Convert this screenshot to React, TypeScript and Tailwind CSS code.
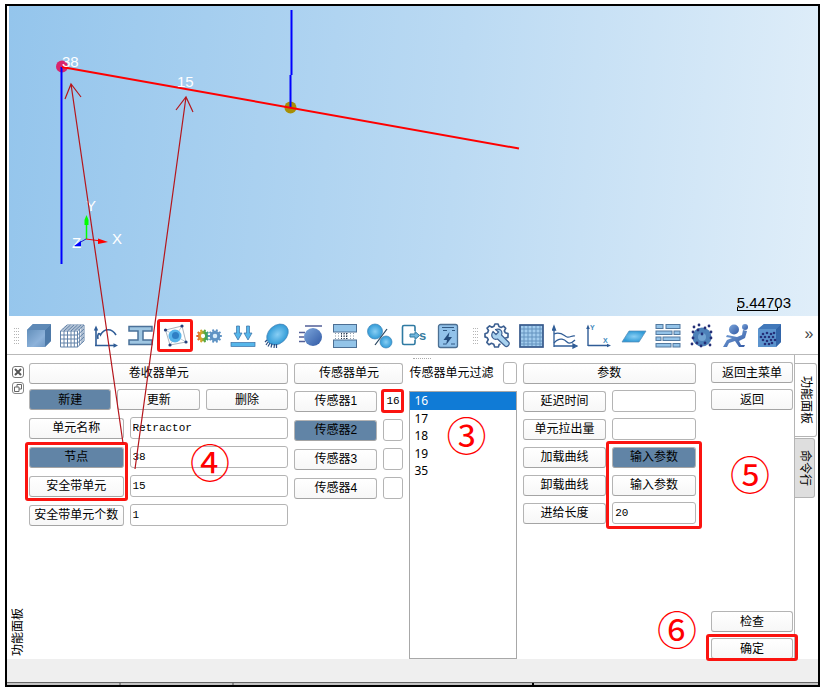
import React from "react";

const uiFont = "font-['Liberation_Sans','Noto_Sans_CJK_SC',sans-serif]";
const box =
  "min-w-0 rounded-[3px] border border-[#b4b4b4] border-b-[#a4a4a4] text-[12px] leading-[18px] text-black";

function Btn({ children, active = false, ring = false }: {
  children: React.ReactNode;
  active?: boolean;
  ring?: boolean;
}) {
  return (
    <button
      type="button"
      className={`${box} relative h-[21px] w-full whitespace-nowrap ${
        active ? "border-[#527595] bg-[#6184a6]" : "bg-linear-to-b from-white to-[#f7f7f7]"
      }`}
    >
      {children}
      {ring && <Ring className="-inset-x-[6px] -top-[5px] -bottom-[3px] border-[3px]" />}
    </button>
  );
}

function Field({ value = "", label }: { value?: string; label: string }) {
  return (
    <input
      type="text"
      aria-label={label}
      defaultValue={value}
      className="h-[22px] w-full min-w-0 rounded-[3px] border border-[#b4b4b4] bg-white px-[2px] font-['Liberation_Mono',monospace] text-[11px] text-black outline-none"
    />
  );
}

function Ring({ className }: { className: string }) {
  return <span className={`pointer-events-none absolute rounded-[3px] border-[#fb1410] ${className}`} />;
}

function Step({ children, className }: { children: string; className: string }) {
  return (
    <span className={`pointer-events-none absolute font-['Noto_Sans_CJK_SC',sans-serif] text-[40px] leading-[40px] text-[#ff0000] ${className}`}>
      {children}
    </span>
  );
}

function Grip() {
  return (
    <span className="grid grid-cols-3 gap-x-[1px] gap-y-[2px]">
      {Array.from({ length: 18 }, (_, i) => (
        <i key={i} className="h-px w-px bg-[#b5b5b5]" />
      ))}
    </span>
  );
}

function Gear({ cx, cy, r, fill, teeth = 10, hole = "#fff" }: {
  cx: number; cy: number; r: number; fill: string; teeth?: number; hole?: string;
}) {
  const mid = r * 0.62;
  return (
    <g>
      {Array.from({ length: teeth }, (_, i) => {
        const a = (i * 2 * Math.PI) / teeth;
        return (
          <line
            key={i}
            x1={cx + Math.cos(a) * r} y1={cy + Math.sin(a) * r}
            x2={cx + Math.cos(a) * (r + 2)} y2={cy + Math.sin(a) * (r + 2) + 0.01}
            stroke={fill} strokeWidth="2"
          />
        );
      })}
      <circle cx={cx} cy={cy} r={mid + 0.8} fill={hole} stroke={fill} strokeWidth="3" />
    </g>
  );
}

const navy = "#2f5c96";

const leftTools: [string, React.ReactNode][] = [
  ["实体", <>
    <path d="M2 7 8 1H26V18L20 24H2Z" fill="url(#steel)" />
    <path d="M2 7 8 1H26L20 7Z" fill="#5e89b6" />
    <path d="M20 7 26 1V18L20 24Z" fill="#4d79a8" />
  </>],
  ["网格", <g fill="none" stroke="#6282a8" strokeWidth="1">
    <path d="M1.500 8H18.500V24H1.500ZM5 8V24M8.500 8V24M12 8V24M15.300 8V24M1.500 12H18.500M1.500 16H18.500M1.500 20H18.500" />
    <path d="M1.500 8 8 2H25L18.500 8M25 2V18L18.500 24M5 8 11.500 2M8.500 8 15 2M12 8 18.500 2M15.300 8 22 2M3.700 6H20.700M5.800 4H23M20.700 6V22M23 4V20M18.500 12 25 6M18.500 16 25 10M18.500 20 25 14" />
  </g>],
  ["曲线", <g fill="none" stroke={navy} strokeWidth="1.600">
    <path d="M3 23V6M2 22.500H21" />
    <path d="M3 2.500 .8 7.500H5.200ZM25 22.500 20.500 20.300V24.700Z" fill={navy} stroke="none" />
    <path d="M5 16C4 11 6 9 7.500 12C11 5 19 5 23 12" />
  </g>],
  ["梁", <path d="M2 3.500H25V8H16V17H25V21.500H2V17H11V8H2Z" fill="#9fc6e2" stroke="#4b7199" strokeWidth="1.500" />],
  ["安全带", <>
    <path d="M3.500 7 20 3 24 19 8 22Z" fill="none" stroke="#a9b3be" strokeWidth="1" />
    <path d="M3.500 7 24 19M20 3 8 22" stroke="#9db8cc" strokeWidth=".7" />
    <circle cx="13" cy="13" r="6.500" fill="#57b4ea" /><circle cx="13.500" cy="12.500" r="3.500" fill="#2f7fc4" />
    <g fill="#24407c"><circle cx="3.500" cy="7" r="1.600" /><circle cx="20" cy="3" r="1.600" /><circle cx="24" cy="19" r="1.600" /><circle cx="8" cy="22" r="1.600" /></g>
  </>],
  ["耦合", <>
    <Gear cx={7} cy={13} r={4.6} fill="url(#rainbow)" />
    <Gear cx={19} cy={13} r={4.8} fill="#5f93c4" hole="#d9edfa" />
  </>],
  ["载荷", <g fill="#56b6ea" stroke="#386ea4" strokeWidth=".7">
    <path d="M6.500 3H9.500V10L12 10 8 17 4 10 6.500 10ZM16.500 3H19.500V10L22 10 18 17 14 10 16.500 10Z" />
    <rect x="1" y="19.500" width="24" height="4" />
  </g>],
  ["约束", <>
    <ellipse cx="13.500" cy="11.500" rx="12" ry="9" transform="rotate(-42 13.500 11.500)" fill="url(#ball)" stroke="#4381b6" strokeWidth=".7" />
    <path d="M3 17 1 19M4 19 2 22M6 20 4 23.500M8 20.500 7 24.500M10.500 21 10 25M12.500 21 12.500 25" stroke="#294d82" strokeWidth="1.200" />
  </>],
  ["初速度", <>
    <circle cx="15" cy="14" r="9" fill="url(#blueBall)" />
    <path d="M7 3H24M1 9.500H7M1 14H6M1 18.500H7" stroke="#525f98" strokeWidth="1.700" />
  </>],
  ["接触", <>
    <g fill="#93c4e8" stroke="#4c6f94" strokeWidth="1"><rect x="1.500" y="1.500" width="23" height="7.500" /><rect x="1.500" y="17" width="23" height="7.500" /></g>
    <path d="M3 10.500H23M3 13H23M3 15.500H23" stroke="#8c9ba9" strokeDasharray="1 2" />
    <path d="M9.500 10V16M12 10V16M14.500 10V16" stroke="#283951" strokeDasharray="1.500 1" />
  </>],
  ["连接", <g stroke="#3d84b8" strokeWidth=".7">
    <circle cx="8" cy="8.500" r="7.500" fill="url(#ball)" /><circle cx="19" cy="19" r="6" fill="url(#ball)" />
    <path d="M8 22 20 6" stroke="#26445e" strokeWidth="1.200" />
  </g>],
  ["输出", <>
    <path d="M14 8V4Q14 2.500 12.500 2.500H3Q1.500 2.500 1.500 4V20Q1.500 21.500 3 21.500H12.500Q14 21.500 14 20V17" fill="none" stroke="#2f7aa2" strokeWidth="1.600" />
    <path d="M9 11H14V8.500L18.500 12.500 14 16.500V14H9Z" fill="#72b6dc" stroke="#2f7aa2" />
    <text x="18" y="17" className="font-['Liberation_Sans']" fontSize="13" fontWeight="700" fill="#397c9f">s</text>
  </>],
  ["计算", <>
    <rect x="3.500" y="1.500" width="19" height="23" rx="2" fill="#92c2ea" stroke="#4c6f92" strokeWidth="1.300" />
    <path d="M7 4.500H19M8 7.500H12M17 7.500H20M8 21H11M16 21H20" stroke="#315983" strokeWidth="1.200" />
    <path d="M14.500 9 8.500 17H12L11 22 17 14H13.500Z" fill="#244b7b" />
  </>],
];

const rightTools: [string, React.ReactNode][] = [
  ["设置", <g fill="none" stroke="#3c5f91" strokeWidth="1.800" strokeLinejoin="round">
    <path d="M17 22 15.500 22 14.500 25H10.500L9.500 22 7 21 4.300 22.500 2 20 3.500 17 2.500 15 0 14V10.500L2.800 9.500 3.800 7 2.200 4.500 5 2 7.500 3.500 9.800 2.500 10.800 0H14.200L15.200 2.800 17.500 3.700 20.200 2.300 22.500 4.800 21 7.500 22 9.500 25 10.500V14.500L22 15.200" transform="translate(1 1) scale(.92)" />
    <path d="M9 8.500 12 11.500 14.500 9 11.500 6.500C16 5 19 8 17.500 12L25 19.500C26 22 23 24.500 21 23L13.500 16C9 17.500 6 13 9 8.500Z" fill="#a9d2ef" strokeWidth="1.200" />
  </g>],
  ["表格", <>
    <rect x="2" y="2" width="23" height="22" fill="#a3cdee" stroke="#35588a" strokeWidth="1.700" />
    <path d="M6 3V23M10 3V23M14 3V23M18 3V23M22 3V23M3 6H24M3 10H24M3 14H24M3 18H24M3 21H24" stroke="#6593bf" strokeWidth="1" />
  </>],
  ["多曲线", <g fill="none" stroke={navy} strokeWidth="1.300">
    <path d="M2 24V5M2 23H22" /><path d="M2 3 .5 7H3.500ZM25 23 21 21V25Z" fill={navy} />
    <path d="M2 11C9 8 12 13 15 14S20 12 23 13M2 20C8 13 13 17 15 19S20 20 23 17" />
  </g>],
  ["坐标系", <>
    <path d="M2 23V4M2 22.500H22" stroke={navy} strokeWidth="1.400" />
    <path d="M2 1.500 .2 6H3.800ZM25 22.500 21 20.700V24.300Z" fill={navy} />
    <text x="4" y="7" fontSize="7" className="font-['Liberation_Sans']" fontWeight="700" fill="#3f8bbd">Y</text>
    <text x="17" y="20" fontSize="7" className="font-['Liberation_Sans']" fontWeight="700" fill="#3f8bbd">X</text>
  </>],
  ["平面", <path d="M1 19 8 8H25L18 19Z" fill="url(#ball)" stroke="#5789b5" strokeWidth=".7" />],
  ["材料", <g fill="#94c3e8" stroke="#52799f" strokeWidth="1">
    <rect x="1" y="1.500" width="7" height="4" /><rect x="11" y="1.500" width="14" height="4" />
    <rect x="1" y="8" width="16" height="3.500" /><rect x="19" y="8" width="6" height="3.500" />
    <rect x="1" y="14" width="5" height="3.500" /><rect x="8" y="14" width="17" height="3.500" />
    <rect x="1" y="20.500" width="15" height="3.500" /><rect x="18" y="20.500" width="7" height="3.500" />
  </g>],
  ["粒子", <>
    <circle cx="13" cy="14" r="9.500" fill="#4d81b9" /><circle cx="13" cy="14" r="4" fill="#71a3d2" />
    <g fill="#242f77">{[[5,4],[10,2],[16,5],[20,3],[22,9],[22,15],[21,22],[16,20],[12,23],[8,20],[3,21],[4,15],[4,9],[9,7],[13,11]].map(([x, y], i) => <circle key={i} cx={x} cy={y} r="1.400" />)}</g>
  </>],
  ["气囊", <g fill="url(#blueBall)">
    <circle cx="11" cy="6.500" r="5" /><circle cx="22" cy="4" r="3" />
    <path d="M4 12 14 14 19 12 20 7 24 8 22 15 16 18 18 22 22 22 21 24H16L12 18 6 20 4 24H0L4 17 9 15 3 14Z" />
  </g>],
  ["气体域", <>
    <path d="M1 6 7 1H24V19L19 24H1Z" fill="#5c94ce" /><path d="M1 6 7 1H24L19 6Z" fill="#4178ba" /><path d="M19 6 24 1V19L19 24Z" fill="#3265a9" />
    <g fill="#252f78">{[[6,11],[10,10],[14,11],[17,10],[4,14],[8,14],[12,14],[16,14],[6,17],[10,18],[14,17],[18,17],[8,21],[12,21],[15,20]].map(([x, y], i) => <circle key={i} cx={x} cy={y} r="1.300" />)}</g>
  </>],
];

function Tools({ items, className }: { items: [string, React.ReactNode][]; className: string }) {
  return (
    <div className={`flex min-w-0 items-center justify-between ${className}`}>
      {items.map(([name, art]) => (
        <button key={name} type="button" aria-label={name} className="relative h-[26px] w-[26px]">
          <svg viewBox="0 0 26 26" className="h-[26px] w-[26px]">{art}</svg>
          {name === "安全带" && <Ring className="-inset-x-[5px] -top-[4px] -bottom-[3px] border-[3px]" />}
        </button>
      ))}
    </div>
  );
}

function Scene() {
  return (
    <div className="relative ml-[2px] h-[310px] overflow-hidden bg-linear-[95deg] from-[#94c5ec] via-[#bbdaf3] via-55% to-[#e0eef9]">
      <svg className="block h-full w-full font-['Liberation_Sans',sans-serif]">
        <g transform="translate(-9 -6)">
          <path d="M291.500 10V75" stroke="#00f" strokeWidth="2" />
          <circle cx="290.500" cy="107.500" r="6" fill="#a88f05" />
          <path d="M290.500 75V107" stroke="#00f" strokeWidth="2" />
          <circle cx="62" cy="66.500" r="6" fill="#d9246c" />
          <path d="M61.500 67V264" stroke="#00f" strokeWidth="2" />
          <path d="M62 67 519 148.500" stroke="#f00" strokeWidth="2" />
          <g fill="#fff" fontSize="15">
            <text x="62" y="67">38</text><text x="177" y="87">15</text>
            <text x="86" y="211">Y</text><text x="112" y="244">X</text><text x="72" y="248">Z</text>
          </g>
          <path d="M86.500 239V218" stroke="#0f0" strokeWidth="1.500" />
          <path d="M86.500 215 88.500 220V225H84.500V220Z" fill="#0f0" />
          <path d="M86 239 101 241" stroke="#f00" /><path d="M98 238.500 108 242 98 244Z" fill="#f00" />
          <path d="M86 239 79 243" stroke="#2222c8" /><path d="M81 241 74 246 81 246Z" fill="#00f" />
        </g>
      </svg>
      <div className="absolute right-[27px] bottom-[5px] font-['Liberation_Sans',sans-serif] text-[15px] leading-[16px] text-black">
        5.44703
        <span className="absolute bottom-0 left-0 h-[4px] w-[41px] border border-t-0 border-black" />
      </div>
    </div>
  );
}

function Row({ children, cols }: { children: React.ReactNode; cols: string }) {
  return <div className={`grid h-[22px] items-center gap-x-[6px] ${cols}`}>{children}</div>;
}

const unitCols = "grid-cols-[94fr_158fr]";
const sensorCols = "grid-cols-[1fr_20px]";
const paramCols = "grid-cols-[1fr_1fr]";

export default function App() {
  return (
    <div className={`relative bg-white px-[5px] py-[4px] text-[12px] text-black ${uiFont}`}>
      <svg width="0" height="0" className="absolute">
        <defs>
          <linearGradient id="steel" x2="1" y2="1"><stop stopColor="#5886b3" /><stop offset=".6" stopColor="#8db2da" /><stop offset="1" stopColor="#648fbd" /></linearGradient>
          <linearGradient id="rainbow" gradientUnits="userSpaceOnUse" x1="0" y1="13" x2="14" y2="13"><stop stopColor="#d8432a" /><stop offset=".35" stopColor="#e0a92a" /><stop offset=".65" stopColor="#4aa840" /><stop offset="1" stopColor="#2f95b8" /></linearGradient>
          <radialGradient id="ball"><stop stopColor="#88cef4" /><stop offset="1" stopColor="#319bd7" /></radialGradient>
          <linearGradient id="blueBall" x2="1" y2="1"><stop stopColor="#7da7dc" /><stop offset="1" stopColor="#3159a4" /></linearGradient>
        </defs>
      </svg>

      <div className="border-2 border-black">
        <Scene />

        <div className="flex h-[39px] items-center gap-[6px] border-b border-[#b9b9b9] pr-[3px] pl-[7px] pt-[1px]" role="toolbar">
          <Grip />
          <Tools items={leftTools} className="flex-[436]" />
          <span className="pl-[6px]"><Grip /></span>
          <Tools items={rightTools} className="flex-[299]" />
          <button type="button" className="ml-[14px] w-[12px] pb-[3px] text-[16px] leading-5 text-[#444]">»</button>
        </div>

        <div className="relative flex h-[304px]">
          <span className="absolute top-[3px] left-1/2 w-[18px] border-t border-dotted border-[#aaa]" />

          <aside className="flex w-[22px] shrink-0 flex-col items-center gap-[4px] pt-[11px] pb-[3px]">
            <button type="button" aria-label="关闭" className="h-[12px] w-[12px] rounded-[3px] border border-[#777]">
              <svg viewBox="0 0 10 10" className="h-[10px] w-[10px]"><path d="M2 2 8 8M8 2 2 8" stroke="#555" strokeWidth="2" /></svg>
            </button>
            <button type="button" aria-label="浮动" className="h-[12px] w-[12px] rounded-[3px] border border-[#888]">
              <svg viewBox="0 0 10 10" className="h-[10px] w-[10px]"><path d="M4 4V1.500H8.500V6H6M1.500 4H6V8.500H1.500Z" fill="none" stroke="#666" /></svg>
            </button>
            <span className="mt-auto rotate-180 leading-[14px] [text-orientation:sideways] [writing-mode:vertical-rl]">功能面板</span>
          </aside>

          <main className="grid min-w-0 flex-1 grid-cols-[259fr_109fr_107fr_173fr_91fr] gap-x-[6px] pt-[7px]">
            <section className="relative flex min-w-0 flex-col gap-[7px]">
              <Row cols="grid-cols-1"><Btn>卷收器单元</Btn></Row>
              <div className="-mt-[2px] grid grid-cols-3 gap-[6px]">
                <Btn active>新建</Btn><Btn>更新</Btn><Btn>删除</Btn>
              </div>
              <Row cols={unitCols}><Btn>单元名称</Btn><Field label="单元名称" value="Retractor" /></Row>
              <div className="relative flex flex-col gap-[7px]">
                <Row cols={unitCols}><Btn active>节点</Btn><Field label="节点" value="38" /></Row>
                <Row cols={unitCols}><Btn>安全带单元</Btn><Field label="安全带单元" value="15" /></Row>
                <div className={`pointer-events-none absolute inset-0 grid gap-x-[6px] ${unitCols}`}>
                  <span className="relative"><Ring className="-inset-x-[4px] -top-[4px] -bottom-[4px] border-[3px]" /></span>
                </div>
              </div>
              <Row cols={unitCols}><Btn>安全带单元个数</Btn><Field label="安全带单元个数" value="1" /></Row>
              <Step className="top-[79px] left-[161px]">④</Step>
            </section>

            <section className="flex min-w-0 flex-col gap-[7px]">
              <Row cols="grid-cols-1"><Btn>传感器单元</Btn></Row>
              {["传感器1", "传感器2", "传感器3", "传感器4"].map((name, i) => (
                <div key={name} className={i === 0 ? "relative -mt-px" : ""}>
                  <Row cols={sensorCols}>
                    <Btn active={i === 1}>{name}</Btn><Field label={name} value={i === 0 ? "16" : ""} />
                  </Row>
                  {i === 0 && <Ring className="-top-px -right-px -bottom-px w-[23px] border-[3px]" />}
                </div>
              ))}
            </section>

            <section className="relative flex min-w-0 flex-col">
              <label className="flex h-[22px] items-center justify-between whitespace-nowrap">
                传感器单元过滤
                <input type="text" className="h-[22px] w-[14px] rounded-[3px] border border-[#b4b4b4] bg-white" />
              </label>
              <div className="mt-[7px] flex-1 border border-[#a8a8a8]">
                <ul role="listbox" className="grid h-[88px] grid-rows-5 font-['Noto_Sans',sans-serif] text-[12px] leading-[18px]">
                  {["16", "17", "18", "19", "35"].map((n, i) => (
                    <li key={n} role="option" aria-selected={i === 0} className={`pl-[4px] ${i === 0 ? "bg-[#107bd6] text-white" : ""}`}>{n}</li>
                  ))}
                </ul>
              </div>
              <Step className="top-[52px] left-[37px]">③</Step>
            </section>

            <section className="flex min-w-0 flex-col gap-[6px]">
              <Row cols="grid-cols-1"><Btn>参数</Btn></Row>
              <Row cols={paramCols}><Btn>延迟时间</Btn><Field label="延迟时间" /></Row>
              <Row cols={paramCols}><Btn>单元拉出量</Btn><Field label="单元拉出量" /></Row>
              <div className="relative flex flex-col gap-[6px]">
                <Row cols={paramCols}><Btn>加载曲线</Btn><Btn active>输入参数</Btn></Row>
                <Row cols={paramCols}><Btn>卸载曲线</Btn><Btn>输入参数</Btn></Row>
                <Row cols={paramCols}><Btn>进给长度</Btn><Field label="进给长度" value="20" /></Row>
                <div className={`pointer-events-none absolute inset-0 grid gap-x-[6px] ${paramCols}`}>
                  <span className="relative col-start-2"><Ring className="-inset-x-[6px] -inset-y-[5px] border-[3px]" /></span>
                </div>
              </div>
            </section>

            <section className="relative flex min-w-0 flex-col gap-[6px] pl-[9px]">
              <Btn>返回主菜单</Btn>
              <Btn>返回</Btn>
              <div className="mt-auto flex flex-col gap-[6px]">
                <Btn>检查</Btn>
                <Btn ring>确定</Btn>
              </div>
              <Step className="top-[91px] left-[28px]">⑤</Step>
              <Step className="right-[96px] bottom-[11px]">⑥</Step>
            </section>
          </main>

          <nav className="ml-px flex w-[24px] shrink-0 flex-col items-start gap-[1px] border-l border-[#b4b4b4] pt-[8px]">
            <button type="button" className="flex h-[74px] w-[22px] items-center justify-center rounded-r-[3px] border border-l-0 border-[#b4b4b4] bg-white leading-[14px] [text-orientation:sideways] [writing-mode:vertical-rl]">功能面板</button>
            <button type="button" className="flex h-[60px] w-[20px] items-center justify-center rounded-r-[3px] border border-l-0 border-[#b4b4b4] bg-[#dedede] leading-[14px] [text-orientation:sideways] [writing-mode:vertical-rl]">命令行</button>
          </nav>
        </div>

        <footer>
          <div className="h-[23px] bg-[#efefef]" />
          <div className="flex h-[3px] border-t border-[#666] bg-[#c4c4c4]">
            <i className="w-[14%] border-r-2 border-[#888]" />
            <i className="w-[14%] border-r-2 border-[#888]" />
            <i className="w-[37%] border-r-2 border-black" />
          </div>
        </footer>
      </div>

      <svg className="pointer-events-none absolute top-0 left-0 h-[480px] w-[300px]" fill="none" stroke="#b5161c" strokeWidth="1.200">
        <path d="M123 443 71 84M65 99 71 84 81 97M135 469 186 97M176 110 186 97 193 112" />
      </svg>
    </div>
  );
}
